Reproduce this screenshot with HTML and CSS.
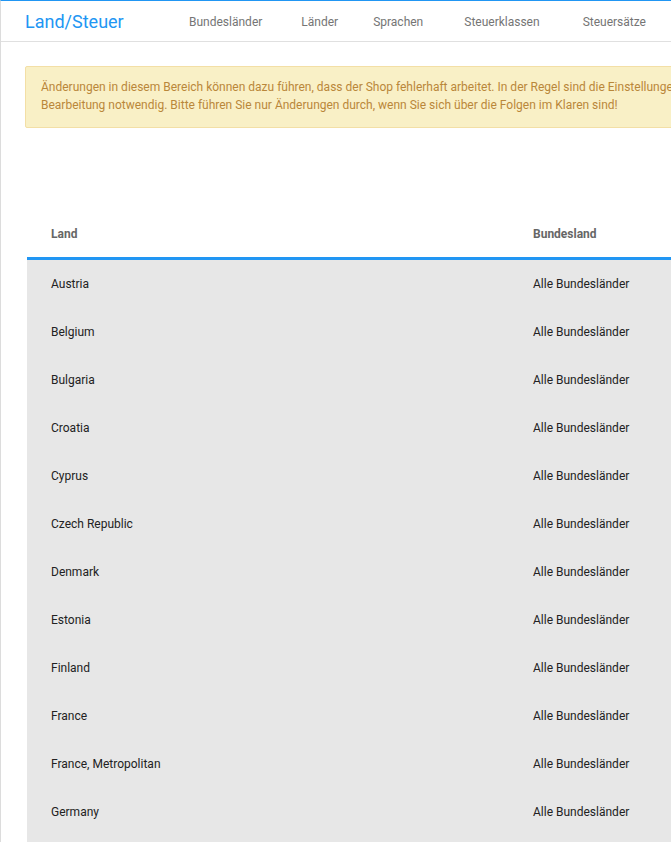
FILE: index.html
```html
<!DOCTYPE html>
<html lang="de">
<head>
<meta charset="utf-8">
<title>Land/Steuer</title>
<link rel="stylesheet" href="styles.css">
</head>
<body>
<div class="page">
  <header class="topbar">
    <div class="brand">Land/Steuer</div>
    <nav class="nav">
      <a class="nav-item">Bundesländer</a>
      <a class="nav-item">Länder</a>
      <a class="nav-item">Sprachen</a>
      <a class="nav-item">Steuerklassen</a>
      <a class="nav-item">Steuersätze</a>
    </nav>
  </header>
  <div class="content">
    <div class="alert">Änderungen in diesem Bereich können dazu führen, dass der Shop fehlerhaft arbeitet. In der Regel sind die Einstellungen nur bei der ersten<br>Bearbeitung notwendig. Bitte führen Sie nur Änderungen durch, wenn Sie sich über die Folgen im Klaren sind!</div>
    <table class="grid">
      <thead>
        <tr><th class="c-land">Land</th><th class="c-bl">Bundesland</th></tr>
      </thead>
      <tbody>
        <tr><td>Austria</td><td>Alle Bundesländer</td></tr>
        <tr><td>Belgium</td><td>Alle Bundesländer</td></tr>
        <tr><td>Bulgaria</td><td>Alle Bundesländer</td></tr>
        <tr><td>Croatia</td><td>Alle Bundesländer</td></tr>
        <tr><td>Cyprus</td><td>Alle Bundesländer</td></tr>
        <tr><td>Czech Republic</td><td>Alle Bundesländer</td></tr>
        <tr><td>Denmark</td><td>Alle Bundesländer</td></tr>
        <tr><td>Estonia</td><td>Alle Bundesländer</td></tr>
        <tr><td>Finland</td><td>Alle Bundesländer</td></tr>
        <tr><td>France</td><td>Alle Bundesländer</td></tr>
        <tr><td>France, Metropolitan</td><td>Alle Bundesländer</td></tr>
        <tr><td>Germany</td><td>Alle Bundesländer</td></tr>
        <tr><td></td><td></td></tr>
      </tbody>
    </table>
  </div>
</div>
</body>
</html>
```
FILE: styles.css
```css
html, body {
  margin: 0;
  padding: 0;
  background: #fff;
  overflow: hidden;
}
body {
  font-family: Roboto, "Liberation Sans", Arial, sans-serif;
  color: #222;
}
.page {
  width: 1000px;
  height: 842px;
  border-left: 1px solid #dcdcdc;
  border-top: 1px solid #2196f3;
  box-sizing: border-box;
  overflow: hidden;
}
.topbar {
  display: flex;
  align-items: center;
  height: 40px;
  border-bottom: 1px solid #e0e0e0;
  padding-left: 24px;
}
.brand {
  font-size: 18px;
  color: #2196f3;
  width: 164px;
}
.nav {
  display: flex;
  padding-top: 2px;
}
.nav-item {
  font-size: 12px;
  color: #757575;
  margin-right: 39px;
}
.nav-item:nth-child(2) { margin-right: 35px; }
.nav-item:nth-child(3) { margin-right: 41px; }
.nav-item:nth-child(4) { margin-right: 43px; }
.content {
  padding: 24px 0 0 24px;
}
.alert {
  background: #f9f0c6;
  border: 1px solid #f3dfa6;
  border-radius: 2px;
  color: #b9873a;
  font-size: 12px;
  line-height: 18px;
  padding: 11px 15px 13px 15px;
  width: 940px;
  white-space: nowrap;
}
.grid {
  margin-top: 83px;
  margin-left: 2px;
  border-collapse: collapse;
  width: 800px;
  font-size: 12px;
}
.grid th {
  text-align: left;
  font-weight: 700;
  color: #666;
  height: 46px;
  padding: 0 0 0 24px;
  border-bottom: 3px solid #2196f3;
}
.grid th.c-land {
  width: 458px;
}
.grid td {
  background: #e7e7e7;
  height: 48px;
  padding: 0 0 0 24px;
  color: #222;
}
```
